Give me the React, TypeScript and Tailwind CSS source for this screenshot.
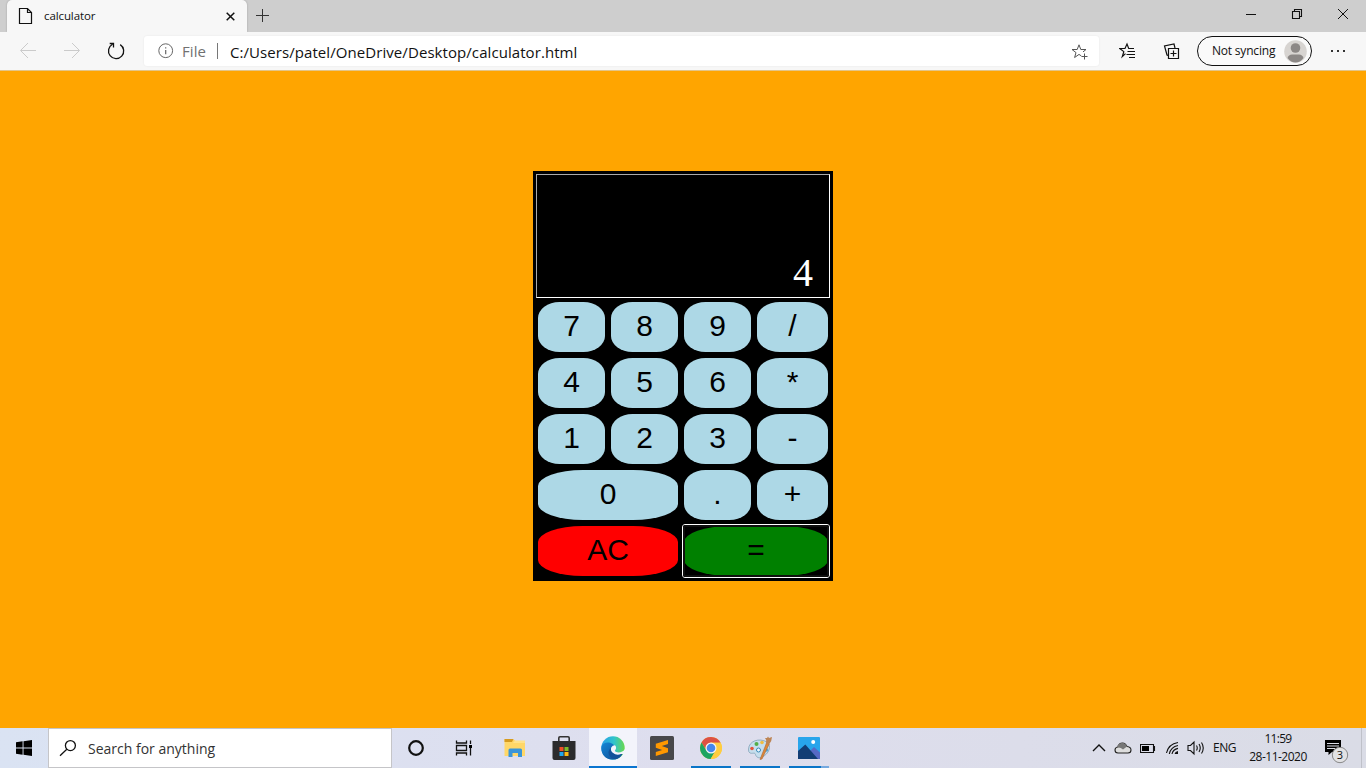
import React from "react";

type IconProps = { children: React.ReactNode; w?: number; h?: number; className?: string };

function Icon({ children, w = 24, h = 24, className = "" }: IconProps) {
  return (
    <svg width={w} height={h} viewBox={`0 0 ${w} ${h}`} fill="none" stroke="#111" strokeWidth="1" className={`block shrink-0 ${className}`}>
      {children}
    </svg>
  );
}

function TabStrip() {
  return (
    <div className="flex h-8 bg-[#cecece] pl-[7px]">
      <div className="flex h-8 w-[240px] shrink-0 items-center rounded-t-[5px] bg-[#f7f7f7] pl-[11px] shadow-[0_0_2px_rgba(0,0,0,0.25)]">
        <Icon w={16} h={18}>
          <path d="M1.5 1.5 H9.5 L13.5 5.5 V16.5 H1.5 Z M9.5 1.5 V5.5 H13.5" strokeWidth="1.2" />
        </Icon>
        <span className="ml-[10px] w-[182px] text-[11.5px] leading-4 tracking-[-0.1px] text-[#111]">calculator</span>
        <Icon w={9} h={9}>
          <path d="M0.7 0.7 L8.3 8.3 M8.3 0.7 L0.7 8.3" strokeWidth="1.5" />
        </Icon>
      </div>
      <Icon w={16} h={32} className="ml-[8px]">
        <path d="M7.5 9 V22 M1 15.5 H14" stroke="#333" />
      </Icon>
      <div className="ml-auto flex">
        <Icon w={46} h={32}><path d="M18 14.5 H28" /></Icon>
        <Icon w={46} h={32}><path d="M18.5 11.5 H25.5 V18.5 H18.5 Z M20.5 11 V9.5 H27.5 V16.5 H26" strokeWidth="1.1" /></Icon>
        <Icon w={46} h={32}><path d="M18 9 L28 19 M28 9 L18 19" /></Icon>
      </div>
    </div>
  );
}

function Toolbar() {
  return (
    <div className="flex h-[39px] items-start border-b border-[#e3c589] bg-[#f7f7f7]">
      <div className="flex h-[38px] w-[144px] shrink-0">
        <Icon w={48} h={38} className="ml-1"><path d="M32 18.5 H17 M24 11 L16.5 18.5 L24 26" stroke="#cbcbcb" /></Icon>
        <Icon w={44} h={38}><path d="M12 18.5 H27 M20 11 L27.5 18.5 L20 26" stroke="#cbcbcb" /></Icon>
        <Icon w={44} h={38}>
          <path d="M24.2 12.6 A7.6 7.6 0 1 1 16.5 12.3 M13.7 11.5 H17.5 V15.5" strokeWidth="1.3" />
        </Icon>
      </div>
      <div className="mt-1 flex h-[30px] w-[955px] shrink-0 items-center rounded-[3px] bg-white shadow-[0_0_2px_rgba(0,0,0,0.08)]">
        <Icon w={16} h={16} className="ml-[14px]">
          <circle cx="7.7" cy="7.7" r="6.9" stroke="#666" />
          <path d="M7.7 7 V11.2 M7.7 4.2 V5.6" stroke="#666" strokeWidth="1.2" />
        </Icon>
        <span className="ml-[8px] w-[35px] text-[15px] leading-5 tracking-[0.1px] text-[#717171]">File</span>
        <div className="h-[16px] w-px bg-[#777]" />
        <span className="ml-[12px] whitespace-nowrap pt-px text-[15px] leading-5 tracking-[0.07px] text-[#111]">C:/Users/patel/OneDrive/Desktop/calculator.html</span>
        <Icon w={18} h={18} className="ml-auto mr-[10px] mt-[2px]">
          <path d="M10.3 12.9 L8 11.4 L3.6 14.5 L5 9.6 L1 6.5 H6.2 L8 1.8 L9.8 6.5 H15 L12 8.9 M13.5 10.5 V16.5 M10.5 13.5 H16.5" stroke="#555" />
        </Icon>
      </div>
      <Icon w={18} h={18} className="ml-[20px] mt-[10px]">
        <path d="M6.5 11.6 L3.3 14.6 L4.8 9.6 L0.8 6.5 H6 L8 2 L9.7 6.5 H15" strokeWidth="1.2" />
        <path d="M8.5 9.5 H16 M7.5 12.5 H16 M10 15.5 H16" strokeWidth="1.2" />
      </Icon>
      <Icon w={18} h={18} className="ml-[26px] mt-[10px]">
        <path d="M5.5 6.5 H15.5 V16.5 H5.5 Z M10.5 8.5 V14.5 M7.5 11.5 H13.5 M5 13.5 L4 13 L1.5 4 L11 2 L12 6" strokeWidth="1.2" />
      </Icon>
      <div className="ml-[16px] mt-1 flex h-[30px] w-[115px] items-center rounded-full border border-[#111] bg-[#fafafa] pl-[14px]">
        <span className="w-[72px] whitespace-nowrap text-[12px] leading-4 tracking-[-0.2px] text-[#111]">Not syncing</span>
        <svg width="23" height="23" viewBox="0 0 23 23" className="block shrink-0">
          <circle cx="11.5" cy="11.5" r="11.3" fill="#d7d4d1" />
          <circle cx="11.5" cy="8" r="4.8" fill="#8c8886" />
          <path d="M3.5 18 Q4.5 14.5 8 14.5 H15 Q18.5 14.5 19.5 18 Q16 22.5 11.5 22.5 Q7 22.5 3.5 18Z" fill="#8c8886" />
        </svg>
      </div>
      <svg width="18" height="38" viewBox="0 0 18 38" className="ml-[17px] block" fill="#333">
        <rect x="2" y="18" width="2" height="2" /><rect x="8" y="18" width="2" height="2" /><rect x="14" y="18" width="2" height="2" />
      </svg>
    </div>
  );
}

const keys = [
  { label: "7" }, { label: "8" }, { label: "9" }, { label: "/" },
  { label: "4" }, { label: "5" }, { label: "6" }, { label: "*" },
  { label: "1" }, { label: "2" }, { label: "3" }, { label: "-" },
  { label: "0", wide: true }, { label: "." }, { label: "+" },
];

const keyBase = "h-[50px] rounded-[32%] pb-[2px] text-center text-[30px] leading-[48px] text-black";

function Calculator() {
  return (
    <div className="h-[410px] w-[300px] bg-black p-[3px] font-['Liberation_Sans',sans-serif]">
      <div className="flex h-[124px] items-end justify-end border border-b-white border-l-[#aaa] border-r-white border-t-[#aaa] pb-[2px] pr-[16px]">
        <span className="font-['Liberation_Serif',serif] text-[40px] leading-[44px] text-white">4</span>
      </div>
      <div className="ml-[2px] mt-[4px] grid grid-cols-[67px_67px_67px_71px] gap-[6px]">
        {keys.map((k) => (
          <button key={k.label} className={`${keyBase} bg-[#add8e6] ${k.wide ? "col-span-2" : ""}`}>{k.label}</button>
        ))}
        <button className={`${keyBase} col-span-2 bg-[#ff0000]`}>AC</button>
        <div className="relative col-span-2">
          <button className={`${keyBase} w-full bg-[#008000]`}>=</button>
          <div className="pointer-events-none absolute -inset-x-[2px] -inset-y-[2px] rounded-[3px] border border-white">
            <div className="h-full w-full rounded-[2px] border-2 border-[#101010]" />
          </div>
        </div>
      </div>
    </div>
  );
}

function TaskCell({ children, bar = "", active = false }: { children: React.ReactNode; bar?: string; active?: boolean }) {
  return (
    <div className={`mr-px flex h-10 w-12 shrink-0 flex-col items-center ${active ? "bg-[#f3f4fb]" : ""}`}>
      <div className="flex h-[38px] items-center pt-[2px]">{children}</div>
      <div className={`h-[2px] ${bar}`} />
    </div>
  );
}

function Taskbar() {
  return (
    <div className="flex h-10 bg-linear-to-r from-[#dae3f3] via-[#dedeee] to-[#dadce6]">
      <div className="flex w-12 shrink-0 items-center justify-center">
        <svg width="16" height="16" viewBox="0 0 16 16" fill="#000" className="block">
          <path d="M0 2.2 L6.6 1.3 V7.5 H0Z M7.5 1.2 L16 0 V7.5 H7.5Z M0 8.5 H6.6 V14.7 L0 13.8Z M7.5 8.5 H16 V16 L7.5 14.8Z" />
        </svg>
      </div>
      <div className="flex w-[344px] shrink-0 items-center border border-[#c5c5c8] bg-white pl-[10px]">
        <Icon w={18} h={18}>
          <circle cx="11.4" cy="6.6" r="5" strokeWidth="1.3" />
          <path d="M7.8 10.2 L1 16.7" strokeWidth="1.3" />
        </Icon>
        <span className="ml-[11px] pt-px text-[14px] leading-5 text-[#333]">Search for anything</span>
      </div>
      <TaskCell>
        <Icon w={18} h={18}><circle cx="9" cy="9" r="6.8" strokeWidth="2.2" /></Icon>
      </TaskCell>
      <TaskCell>
        <Icon w={18} h={18} className="mr-[2px]">
          <path d="M1.5 1.5 V4 H11.5 V1.5 M1.5 16.5 V14 H11.5 V16.5 M1.5 6.5 H11.5 V11.5 H1.5 Z M15.5 1.5 V5 M15.5 9 V16.5" strokeWidth="1.3" />
          <rect x="14" y="6" width="3" height="3" fill="#000" stroke="none" />
        </Icon>
      </TaskCell>
      <div className="ml-px flex">
        <TaskCell>
          <svg width="22" height="20" viewBox="0 0 22 20" className="block">
            <path d="M0.5 1 H9 L11.5 3 H21 V18 H0.5Z" fill="#ffd768" />
            <path d="M0.5 1 H9.5 L8 4 H0.5Z" fill="#d69b20" />
            <path d="M11 2.5 H21 V5 H9Z" fill="#ffe28b" />
            <path d="M4.5 19 V12 Q4.5 10.5 6 10.5 H16.5 Q18 10.5 18 12 V19 H14 V15 H8.5 V19Z" fill="#3a95d8" />
          </svg>
        </TaskCell>
        <TaskCell>
          <svg width="24" height="26" viewBox="0 0 24 26" className="block">
            <path d="M6.8 8 V3 Q6.8 1.8 8 1.8 H16 Q17.2 1.8 17.2 3 V8" fill="none" stroke="#333" strokeWidth="1.6" />
            <path d="M0.5 6 H23.5 V23 Q23.5 25 21.5 25 H2.5 Q0.5 25 0.5 23Z" fill="#2b2b2d" />
            <rect x="7.5" y="12" width="4" height="4" fill="#ef5027" /><rect x="12.5" y="12" width="4" height="4" fill="#7eba28" />
            <rect x="7.5" y="17" width="4" height="4" fill="#20a7ed" /><rect x="12.5" y="17" width="4" height="4" fill="#fcb813" />
          </svg>
        </TaskCell>
        <TaskCell active bar="w-12 bg-[#0a75d0]">
          <svg width="24" height="24" viewBox="0 0 24 24" className="block">
            <defs>
              <linearGradient id="edgeTop" x1="0" x2="1"><stop offset="0" stopColor="#269ee7" /><stop offset="0.55" stopColor="#31c4cb" /><stop offset="1" stopColor="#68d84c" /></linearGradient>
              <linearGradient id="edgeBottom" x1="0" y1="0" x2="1" y2="1"><stop offset="0" stopColor="#1387d7" /><stop offset="1" stopColor="#10498f" /></linearGradient>
            </defs>
            <circle cx="12" cy="12" r="11.7" fill="url(#edgeTop)" />
            <path d="M0.5 10.5 C2.5 4 13 6 14 11 Q10.5 10 9.7 13 C9.4 17.5 15.5 20 21.8 16.9 Q18.5 24 11 23.6 C3.5 23 -0.5 17 0.5 10.5Z" fill="url(#edgeBottom)" />
            <path d="M10.3 11.2 Q5.8 15.2 8.8 20.2 Q10.5 22.9 14 23.3 Q19.5 22 21.8 16.9 Q15.5 20 11.6 16.6 Q8.8 14 10.3 11.2Z" fill="#10539b" />
            <path d="M14 9.3 Q16.3 12 13.8 14.7 C15.2 17.5 22 16.8 24 13 V18 H20 Q15.5 19.8 11.8 16.8 Q9 14 10.4 11.2 Q11.5 9.2 14 9.3Z" fill="#f3f4fb" />
          </svg>
        </TaskCell>
        <TaskCell>
          <svg width="24" height="24" viewBox="0 0 24 24" className="block">
            <rect width="24" height="24" rx="1.5" fill="#48484a" />
            <path d="M5.8 7.8 L18 4 V8 L11.8 10.1 L18 12.3 V16.2 L5.8 20 V16 L12.2 14 L5.8 11.7Z" fill="#ff9800" />
          </svg>
        </TaskCell>
        <TaskCell bar="w-10 bg-[#0a75c8]">
          <svg width="24" height="24" viewBox="0 0 24 24" className="block">
            <circle cx="12" cy="12" r="11" fill="#ffcd40" />
            <path d="M2.5 6.5 A11 11 0 0 1 21.6 6.7 H12 A5.3 5.3 0 0 0 7.4 14.6Z" fill="#dd5144" />
            <path d="M2.5 6.5 A11 11 0 0 0 11.7 23 L16.6 14.6 H7.4Z" fill="#1da462" />
            <path d="M21.6 6.7 A11 11 0 0 1 11.7 23 L16.6 14.6 L12 6.7Z" fill="#ffcd40" />
            <circle cx="12" cy="12" r="5.5" fill="#f5f5f5" /><circle cx="12" cy="12" r="4.3" fill="#4687ed" />
          </svg>
        </TaskCell>
        <TaskCell bar="w-10 bg-[#0a75c8]">
          <svg width="26" height="26" viewBox="0 0 26 26" className="block">
            <path d="M1.5 14 C2 6 12 2.5 20 7 C25 11 22 19 15 22 C12 24 9 22 8.5 19.5 C8 17 5 19 3 18 Q1.2 17 1.5 14Z" fill="#c6deed" stroke="#81a2b8" strokeWidth=".8" />
            <circle cx="5" cy="13.5" r="1.8" fill="#e5533d" /><circle cx="9.5" cy="9" r="2" fill="#53ae49" /><circle cx="15" cy="7.5" r="1.8" fill="#efbd43" />
            <circle cx="11.5" cy="15" r="2" fill="#eef8ff" stroke="#3588b7" /><circle cx="19.5" cy="15" r="1.8" fill="#59a8da" />
            <path d="M13 24.5 L19.5 8 L22.2 9 L15 24Z" fill="#df8736" stroke="#a5673b" strokeWidth=".6" />
            <path d="M19 8.8 L19.2 5 L18 3 L20 3 L21 1.5 L22 3 L25 2 L24.2 6 L22 9.5Z" fill="#bd8453" />
          </svg>
        </TaskCell>
        <TaskCell bar="w-10 border-r-8 border-[#76a9df] bg-[#0a75c8]">
          <svg width="22" height="22" viewBox="0 0 22 22" className="block">
            <rect width="22" height="22" rx="1" fill="#28a5eb" />
            <path d="M10 16 L16 10 L22 15.5 V22 H10Z" fill="#5669c5" />
            <path d="M0 14 L7.3 7.5 L20 22 H0Z" fill="#123d74" />
            <circle cx="15.2" cy="5" r="2" fill="#fff" />
          </svg>
        </TaskCell>
      </div>
      <div className="ml-auto flex items-center">
        <Icon w={14} h={14} className="mr-[8px]"><path d="M1 10 L7 4 L13 10" strokeWidth="1.4" /></Icon>
        <svg width="18" height="14" viewBox="0 0 18 14" className="mr-[8px] block">
          <path d="M4 12 Q1 12 1 9 Q1 6.5 3.8 6 Q5 2 8.5 2 Q11.5 2 13 5.5 Q17 6 17 9 Q17 12 14 12Z" fill="#ddd" stroke="#222" strokeWidth="1.1" />
          <path d="M2.5 6.8 Q4 2 8.5 2 Q11.7 2 13 5.5 L9 8.5 Q6 5.5 2.5 6.8Z" fill="#777" />
        </svg>
        <Icon w={17} h={14} className="mr-[8px]"><path d="M0.5 3.5 H13.5 V11.5 H0.5Z M13.5 5.5 H14.5 V9.5 H13.5" strokeWidth="1.1" /><rect x="2" y="5" width="7" height="5" fill="#000" stroke="none" /></Icon>
        <Icon w={16} h={16} className="mr-[6px]">
          <path d="M1.5 13 Q3.5 4 13 2.5 M4.3 14 Q5.8 6.8 13 5.5 M7 14 Q8 9.4 13 8.4" strokeWidth="1.1" />
          <path d="M9.5 14 Q10 11.3 13 11 V14Z" fill="#111" stroke="none" />
        </Icon>
        <Icon w={18} h={16} className="mr-[8px]">
          <path d="M1 5.5 H3.5 L7 2 V14 L3.5 10.5 H1Z M9.5 5.5 Q11 8 9.5 10.5 M12 4 Q14.5 8 12 12 M14.5 2.5 Q18 8 14.5 13.5" strokeWidth="1.1" />
        </Icon>
        <span className="w-[23px] whitespace-nowrap text-[12px] leading-4 tracking-[-0.5px] text-[#111]">ENG</span>
        <div className="ml-[12px] flex w-[60px] flex-col items-center whitespace-nowrap text-[12px] leading-[18px] text-[#111]">
          <span className="tracking-[-0.7px]">11:59</span>
          <span className="tracking-[-0.5px]">28-11-2020</span>
        </div>
        <svg width="26" height="28" viewBox="0 0 26 28" className="ml-[16px] mt-[4px] block">
          <path d="M1 4 H17 V16 H8 L4.5 19 V16 H1Z" fill="#000" />
          <path d="M3 7.5 H15 M3 10 H15 M3 12.5 H11" stroke="#dadce6" strokeWidth="1" />
          <circle cx="16" cy="19" r="7.7" fill="#e2e2e4" stroke="#888" strokeWidth="1" />
          <text x="16" y="23" textAnchor="middle" fontSize="11" fill="#111" fontFamily="Open Sans, sans-serif">3</text>
        </svg>
        <div className="ml-[11px] mr-[4px] h-10 w-px bg-[#bfc1c9]" />
      </div>
    </div>
  );
}

export default function App() {
  return (
    <div className="flex h-[768px] w-[1366px] flex-col overflow-hidden bg-[#ffa500] font-['Open_Sans','Noto_Sans',sans-serif]">
      <TabStrip />
      <Toolbar />
      <main className="flex flex-1 items-start justify-center pt-[100px]">
        <Calculator />
      </main>
      <Taskbar />
    </div>
  );
}
